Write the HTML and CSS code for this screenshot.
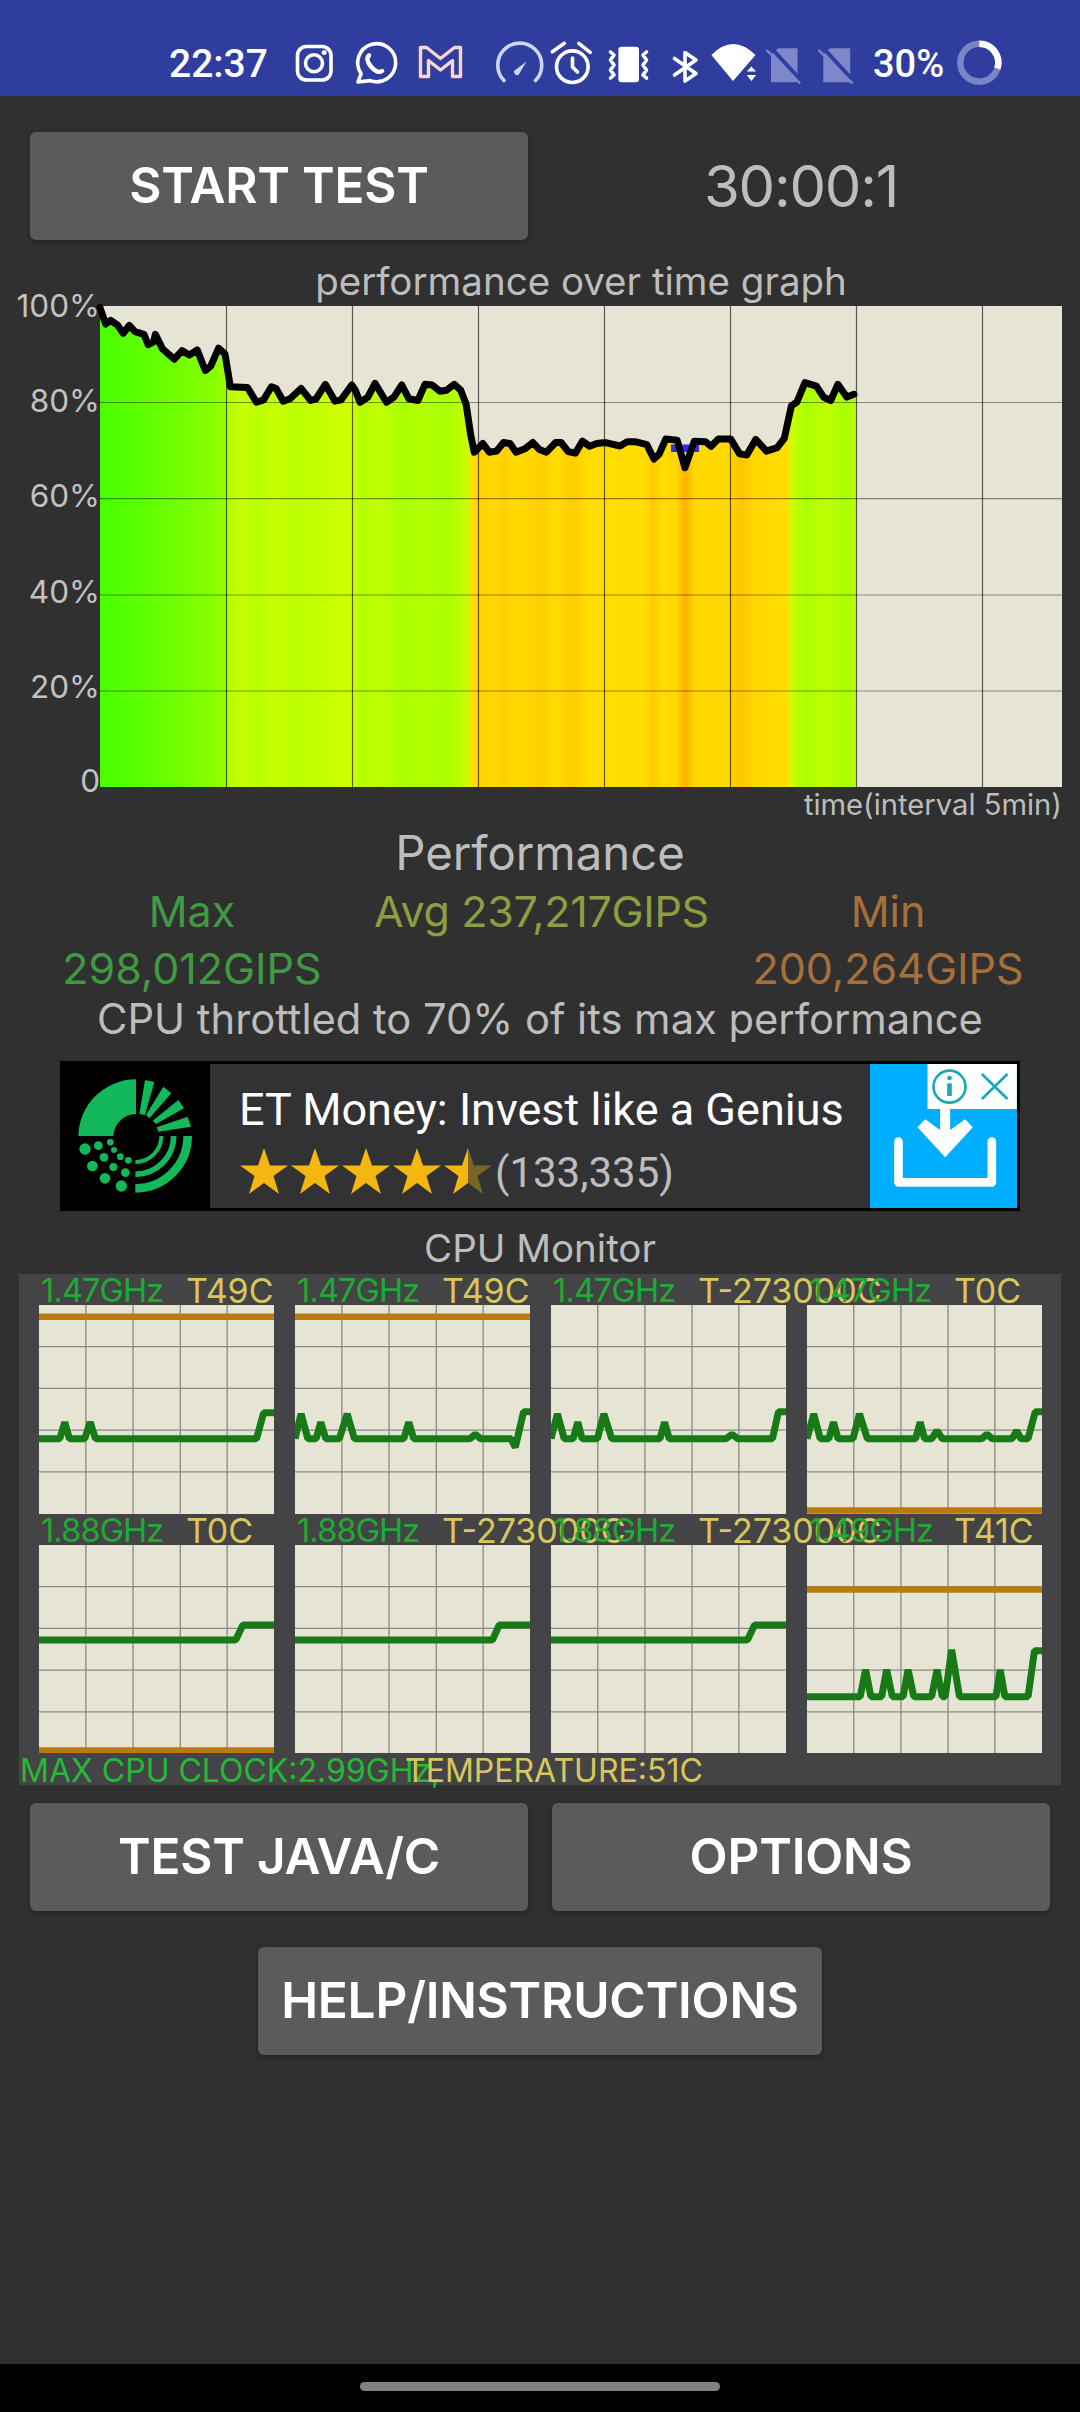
FILE: index.html
```html
<!DOCTYPE html>
<html lang="en">
<head>
<meta charset="utf-8">
<title>CPU Throttling Test</title>
<link rel="stylesheet" href="styles.css">
</head>
<body>
<div class="page">
  <header class="status">
    <span class="clock">22:37</span>
    <svg width="60" height="44" viewBox="290 42 60 44"><rect x="297.5" y="46.5" width="33.5" height="33.5" rx="9" class="ln"/><circle cx="314" cy="63.3" r="8.5" class="ln"/><circle cx="324.2" cy="52.6" r="2.5" class="wh"/></svg>
    <svg width="60" height="44" viewBox="350 42 60 44"><path d="M358 82L361.1 73.6A19 19 0 1 1 370.2 80.6Z" class="ln"/><path d="M369 55.5c-2.5 2-2 6 1.5 10.5c4 5 8.5 7 11.5 5" class="ln thick"/></svg>
    <svg width="80" height="44" viewBox="410 42 80 44"><path d="M420.5 47.5h6l14 11 14-11h6v29h-8v-16l-12 9.5-12-9.500v16h-8z" class="mail"/></svg>
    <svg width="58" height="44" viewBox="490 42 58 44"><path d="M504 80.500A22 22 0 1 1 535.500 80.500" class="ln soft"/><path d="M526.500 61.500L518.500 75A3.500 3.500 0 0 1 514 71Z" class="softfill"/></svg>
    <svg width="56" height="44" viewBox="548 42 56 44"><circle cx="572.300" cy="66.700" r="15.800" class="ln"/><path d="M572.500 58v9l5 5M552.300 51.700L564.400 43.300M578.800 43.300L590.200 52.300" class="ln"/></svg>
    <svg width="56" height="44" viewBox="604 42 56 44"><rect x="618.400" y="46.700" width="20.600" height="35.600" rx="3" class="wh"/><path d="M610.500 52l3.500 3-3.500 5 3.500 5-3.500 5 3.500 5-3.500 3M646.500 52l-3.500 3 3.500 5-3.500 5 3.500 5-3.500 5 3.500 3" class="ln"/></svg>
    <svg width="46" height="44" viewBox="660 42 46 44"><path d="M674.500 58.500L696 73.500 685 81V52.500L696 60 674.500 75" class="ln"/></svg>
    <svg width="56" height="44" viewBox="706 42 56 44"><path d="M711.400 55Q733 33 755.500 55L733 81Z" class="wh"/><path d="M751.400 66.500l4.700 5h-9.400zM751.400 81l-4.700-6h9.400z" class="wh"/></svg>
    <svg width="52" height="44" viewBox="762 42 52 44"><path d="M778 48.300H797.500V82.300H771V54.500Z" class="simfill"/><path d="M768.500 45L802.500 82" class="simcut"/><path d="M766.500 50L800.200 83.500" class="simline"/></svg>
    <svg width="54" height="44" viewBox="814 42 54 44"><path d="M830.300 48.300H850.200V82.300H823.300V54.500Z" class="simfill"/><path d="M820.500 45L854.500 82" class="simcut"/><path d="M818.500 50L852.600 83.500" class="simline"/></svg>
    <span class="pct">30%</span>
    <svg width="60" height="44" viewBox="960 42 60 44"><circle cx="979.300" cy="62.700" r="19" class="ring-bg"/><path d="M979.300 43.700A19 19 0 0 1 997.400 68.600" class="ring-fg"/></svg>
  </header>

  <div class="btn-row">
    <button class="btn">START TEST</button>
    <div class="timer">30:00:1</div>
  </div>

  <div class="chart-title">performance over time graph</div>
  <svg class="chart" width="1080" height="481" viewBox="0 0 1080 481">
    <defs>
      <linearGradient id="heat" gradientUnits="userSpaceOnUse" x1="280" x2="2397" y1="0" y2="0">
        <stop offset="0" stop-color="#48ff00"/><stop offset=".05" stop-color="#5cff00"/><stop offset=".1" stop-color="#70ff00"/><stop offset=".15" stop-color="#88ff00"/><stop offset=".165" stop-color="#98ff00"/><stop offset=".17" stop-color="#b4ff00"/><stop offset=".185" stop-color="#c8ff00"/><stop offset=".21" stop-color="#b8ff00"/><stop offset=".23" stop-color="#c8ff00"/><stop offset=".25" stop-color="#bcff00"/><stop offset=".28" stop-color="#c0ff00"/><stop offset=".3" stop-color="#c8ff00"/><stop offset=".335" stop-color="#d0ff00"/><stop offset=".345" stop-color="#b4ff00"/><stop offset=".37" stop-color="#c0ff00"/><stop offset=".4" stop-color="#aaff00"/><stop offset=".43" stop-color="#b4ff00"/><stop offset=".46" stop-color="#a8ff00"/><stop offset=".485" stop-color="#c8ff00"/><stop offset=".492" stop-color="#ffe000"/><stop offset=".505" stop-color="#ffd000"/><stop offset=".52" stop-color="#ffdc00"/><stop offset=".535" stop-color="#ffcf00"/><stop offset=".55" stop-color="#ffdc00"/><stop offset=".584" stop-color="#ffce00"/><stop offset=".603" stop-color="#ffdd00"/><stop offset=".624" stop-color="#ffcc00"/><stop offset=".645" stop-color="#ffde00"/><stop offset=".72" stop-color="#ffdd00"/><stop offset=".732" stop-color="#ffc800"/><stop offset=".744" stop-color="#ffdd00"/><stop offset=".762" stop-color="#ffd800"/><stop offset=".774" stop-color="#ffb000"/><stop offset=".786" stop-color="#ffd800"/><stop offset=".83" stop-color="#ffd800"/><stop offset=".848" stop-color="#ffc400"/><stop offset=".865" stop-color="#ffd800"/><stop offset=".905" stop-color="#ffdd00"/><stop offset=".91" stop-color="#ffe000"/><stop offset=".914" stop-color="#ccff00"/><stop offset=".934" stop-color="#aaff00"/><stop offset=".962" stop-color="#c0ff00"/><stop offset=".986" stop-color="#a8ff00"/><stop offset="1" stop-color="#bcff00"/>
      </linearGradient>
    </defs>
    <rect x="100" y="0" width="962" height="481" class="plot-bg"/>
    <g transform="translate(0 -26) scale(.35714 .34435)">
      <path fill="url(#heat)" d="M280 80L296 128 310 117 330 132 345 155 362 132 378 150 403 158 415 188 430 180 435 158 455 200 488 230 510 205 530 218 552 203 575 263 590 250 612 198 630 215 645 310 693 312 718 355 738 348 760 310 773 315 793 352 812 345 843 315 870 350 885 345 911 303 938 352 955 348 985 305 995 320 1008 355 1030 340 1050 300 1082 355 1103 340 1125 305 1145 345 1170 350 1190 303 1210 305 1232 323 1250 320 1272 303 1290 320 1305 360 1318 450 1328 500 1352 475 1370 500 1390 497 1410 472 1428 475 1445 500 1470 490 1492 472 1510 492 1530 500 1556 472 1571 472 1591 498 1611 503 1631 468 1651 483 1671 475 1696 472 1736 482 1756 470 1781 470 1811 478 1831 520 1846 505 1864 462 1896 465 1918 545 1944 468 1976 470 1991 483 2011 462 2046 462 2071 505 2091 508 2116 463 2146 497 2176 487 2196 460 2216 365 2231 355 2254 298 2286 308 2306 340 2326 350 2346 303 2371 340 2391 332L2397 332 2397 1472 280 1472Z"/>
    </g>
    <path d="M226.500 0V481M352.500 0V481M478.500 0V481M604.500 0V481M730.500 0V481M856.500 0V481M982.500 0V481" class="grid-v"/>
    <path d="M100 96.500H1062M100 192.700H1062M100 289H1062M100 385H1062" class="grid-h"/>
    <rect x="671" y="138.500" width="28" height="7.500" class="marker"/>
    <g transform="translate(0 -26) scale(.35714 .34435)">
      <path class="perf" d="M280 80L296 128 310 117 330 132 345 155 362 132 378 150 403 158 415 188 430 180 435 158 455 200 488 230 510 205 530 218 552 203 575 263 590 250 612 198 630 215 645 310 693 312 718 355 738 348 760 310 773 315 793 352 812 345 843 315 870 350 885 345 911 303 938 352 955 348 985 305 995 320 1008 355 1030 340 1050 300 1082 355 1103 340 1125 305 1145 345 1170 350 1190 303 1210 305 1232 323 1250 320 1272 303 1290 320 1305 360 1318 450 1328 500 1352 475 1370 500 1390 497 1410 472 1428 475 1445 500 1470 490 1492 472 1510 492 1530 500 1556 472 1571 472 1591 498 1611 503 1631 468 1651 483 1671 475 1696 472 1736 482 1756 470 1781 470 1811 478 1831 520 1846 505 1864 462 1896 465 1918 545 1944 468 1976 470 1991 483 2011 462 2046 462 2071 505 2091 508 2116 463 2146 497 2176 487 2196 460 2216 365 2231 355 2254 298 2286 308 2306 340 2326 350 2346 303 2371 340 2391 332"/>
    </g>
    <text x="100" y="11" class="axis">100%</text>
    <text x="100" y="106" class="axis">80%</text>
    <text x="100" y="201" class="axis">60%</text>
    <text x="100" y="297" class="axis">40%</text>
    <text x="100" y="392" class="axis">20%</text>
    <text x="100" y="486" class="axis">0</text>
  </svg>
  <div class="time-label">time(interval 5min)</div>

  <div class="perf-title">Performance</div>
  <div class="stats">
    <div class="stat max">Max</div><div class="stat avg">Avg 237,217GIPS</div><div class="stat min">Min</div>
    <div class="stat max">298,012GIPS</div><div class="stat"></div><div class="stat min">200,264GIPS</div>
  </div>
  <div class="throttle">CPU throttled to 70% of its max performance</div>

  <div class="ad">
    <svg class="ad-logo" width="147" height="144" viewBox="39 42 441 432">
      <path d="M85 258A173 173 0 0 1 258 88L258 192A68 68 0 0 0 190 258Z" class="gr"/>
      <path d="M285 90L313 96 285 195 268 192ZM340 110L364 130 298 205 288 195ZM385 150L402 175 318 222 308 212ZM413 200L423 230 325 245 320 232Z" class="gr"/>
      <path d="M413 258A157 157 0 0 1 256 415" class="arc a1"/><path d="M371 258A115 115 0 0 1 256 373" class="arc a2"/><path d="M334 258A78 78 0 0 1 256 336" class="arc a3"/>
      <g class="gr"><circle cx="105" cy="297" r="17"/><circle cx="145" cy="287" r="13"/><circle cx="181" cy="277" r="10"/><circle cx="192" cy="300" r="9"/><circle cx="162" cy="322" r="13"/><circle cx="127" cy="348" r="16"/><circle cx="211" cy="320" r="10"/><circle cx="235" cy="331" r="10"/><circle cx="190" cy="351" r="12"/><circle cx="226" cy="368" r="13"/><circle cx="165" cy="385" r="16"/><circle cx="214" cy="408" r="17"/></g>
    </svg>
    <div class="ad-body">
      <div class="ad-title">ET Money: Invest like a Genius</div>
      <div class="ad-rating">
        <svg class="stars" width="256" height="46" viewBox="0 0 256 46">
          <g class="gold">
            <polygon points="24,0 30,17.500 48,17.500 33.500,28 39,46 24,35 9,46 14.500,28 0,17.500 18,17.500"/>
            <polygon points="75,0 81,17.500 99,17.500 84.500,28 90,46 75,35 60,46 65.500,28 51,17.500 69,17.500"/>
            <polygon points="126,0 132,17.500 150,17.500 135.500,28 141,46 126,35 111,46 116.500,28 102,17.500 120,17.500"/>
            <polygon points="177,0 183,17.500 201,17.500 186.500,28 192,46 177,35 162,46 167.500,28 153,17.500 171,17.500"/>
            <polygon points="228,0 222,17.500 204,17.500 218.500,28 213,46 228,35"/>
          </g>
          <polygon class="dim" points="228,0 234,17.500 252,17.500 237.500,28 243,46 228,35"/>
        </svg>
        <span class="rating">(133,335)</span>
      </div>
    </div>
    <svg class="ad-cta" width="147" height="144" viewBox="690 42 440 432">
      <rect x="862" y="42" width="268" height="135" class="wh"/>
      <circle cx="928" cy="110" r="48" class="teal"/>
      <path d="M928 100V138" class="teal thickt"/><circle cx="928" cy="84" r="7" class="tealfill"/>
      <path d="M1025 72L1102 147M1102 72L1025 147" class="teal"/>
      <path d="M900 177H930V240L975 208 998 232 915 322 832 232 855 208 900 240Z" class="wh"/>
      <path d="M775 275V397H1055V275" class="tray"/>
    </svg>
  </div>

  <div class="monitor-title">CPU Monitor</div>
  <section class="monitor">
    <div class="cell">
      <div class="cell-label"><span class="freq">1.47GHz</span><span class="temp">T49C</span></div>
      <svg class="graph" width="235" height="208.500" viewBox="110 132 657 605" preserveAspectRatio="none">
        <defs><path id="cell-grid" class="cell-lines" d="M131 0V605M263 0V605M395 0V605M526 0V605M0 121H657M0 242H657M0 363H657M0 484H657"/></defs>
        <use href="#cell-grid" x="110" y="132"/>
        <path d="M110 166H767" class="temp-line"/>
        <path d="M110 520H168L182 472 195 520H238L253 472 268 520H718L738 445H768" class="freq-line"/>
      </svg>
    </div>
    <div class="cell">
      <div class="cell-label"><span class="freq">1.47GHz</span><span class="temp">T49C</span></div>
      <svg class="graph" width="235" height="208.500" viewBox="826 132 657 605" preserveAspectRatio="none">
        <use href="#cell-grid" x="826" y="132"/>
        <path d="M826 166H1483" class="temp-line"/>
        <path d="M826 520L843 448 862 520H885L898 472 912 520H950L972 448 992 520H1130L1144 472 1158 520H1315L1330 507 1345 520H1430L1442 545 1465 442H1483" class="freq-line"/>
      </svg>
    </div>
    <div class="cell">
      <div class="cell-label"><span class="freq">1.47GHz</span><span class="temp">T-273000C</span></div>
      <svg class="graph" width="235" height="208.500" viewBox="85 132 658 605" preserveAspectRatio="none">
        <use href="#cell-grid" x="85" y="132"/>
        <path d="M85 520L103 448 122 520H147L160 472 172 520H215L233 448 255 520H390L403 472 416 520H575L592 507 608 520H705L722 442H743" class="freq-line"/>
      </svg>
    </div>
    <div class="cell">
      <div class="cell-label"><span class="freq">1.47GHz</span><span class="temp">T0C</span></div>
      <svg class="graph" width="235" height="208.500" viewBox="801 132 658 605" preserveAspectRatio="none">
        <use href="#cell-grid" x="801" y="132"/>
        <path d="M801 728H1459" class="temp-line"/>
        <path d="M801 520L820 448 838 520H862L875 472 888 520H930L948 448 970 520H1105L1118 472 1130 520H1150L1165 497 1180 520H1290L1305 507 1320 520H1375L1388 497 1400 520H1420L1440 442H1459" class="freq-line"/>
      </svg>
    </div>
    <div class="cell">
      <div class="cell-label"><span class="freq">1.88GHz</span><span class="temp">T0C</span></div>
      <svg class="graph" width="235" height="208.500" viewBox="110 828 657 605" preserveAspectRatio="none">
        <use href="#cell-grid" x="110" y="828"/>
        <path d="M110 1424H767" class="temp-line"/>
        <path d="M110 1104H660L680 1060H767" class="freq-line"/>
      </svg>
    </div>
    <div class="cell">
      <div class="cell-label"><span class="freq">1.88GHz</span><span class="temp">T-273000C</span></div>
      <svg class="graph" width="235" height="208.500" viewBox="826 828 657 605" preserveAspectRatio="none">
        <use href="#cell-grid" x="826" y="828"/>
        <path d="M826 1104H1378L1397 1060H1483" class="freq-line"/>
      </svg>
    </div>
    <div class="cell">
      <div class="cell-label"><span class="freq">1.88GHz</span><span class="temp">T-273000C</span></div>
      <svg class="graph" width="235" height="208.500" viewBox="85 828 658 605" preserveAspectRatio="none">
        <use href="#cell-grid" x="85" y="828"/>
        <path d="M85 1104H635L655 1060H743" class="freq-line"/>
      </svg>
    </div>
    <div class="cell">
      <div class="cell-label"><span class="freq">1.49GHz</span><span class="temp">T41C</span></div>
      <svg class="graph" width="235" height="208.500" viewBox="801 828 658 605" preserveAspectRatio="none">
        <use href="#cell-grid" x="801" y="828"/>
        <path d="M801 957H1459" class="temp-line"/>
        <path d="M801 1268H950L965 1190 980 1268H1010L1024 1190 1040 1268H1070L1084 1190 1100 1268H1150L1165 1190 1180 1268H1188L1206 1132 1228 1268H1330L1342 1190 1355 1268H1420L1438 1135H1459" class="freq-line"/>
      </svg>
    </div>
    <div class="monitor-foot"><span class="foot-clock">MAX CPU CLOCK:2.99GHz,</span><span class="foot-temp">TEMPERATURE:51C</span></div>
  </section>

  <div class="btn-row btn-row-low">
    <button class="btn">TEST JAVA/C</button>
    <button class="btn">OPTIONS</button>
  </div>
  <button class="btn btn-help">HELP/INSTRUCTIONS</button>

  <footer class="nav"><div class="home-bar"></div></footer>
</div>
</body>
</html>
```
FILE: styles.css
```css
* { box-sizing: border-box; }
html, body { margin: 0; padding: 0; }
body { background: #303030; font-family: Inter, "Liberation Sans", sans-serif; color: #bdbdbd; }
.page { width: 1080px; height: 2412px; display: flex; flex-direction: column; overflow: hidden; }

/* status bar */
.status { height: 96px; background: #2f3e9e; display: flex; align-items: flex-start; padding: 42px 0 0 169px; font-family: Roboto, sans-serif; font-weight: 500; color: #fff; flex: none; }
.status svg { display: block; flex: none; overflow: visible; }
.clock { width: 121px; font-size: 39px; line-height: 44px; flex: none; }
.pct { width: 92px; padding-left: 5px; font-size: 38px; line-height: 44px; flex: none; }
.ln { fill: none; stroke: #fff; stroke-width: 3.6; stroke-linecap: round; stroke-linejoin: round; }
.thick { stroke-width: 4.5; }
.wh { fill: #fff; }
.soft { stroke: #cfd4f0; }
.softfill { fill: #cfd4f0; }
.mail { fill: none; stroke: #fbd4d6; stroke-width: 3.4; stroke-linejoin: round; }
.simfill { fill: #7d87c9; }
.simcut { stroke: #2f3e9e; stroke-width: 4; fill: none; }
.simline { stroke: #7d87c9; stroke-width: 2.4; fill: none; }
.ring-bg { fill: none; stroke: #7a85c8; stroke-width: 6.5; }
.ring-fg { fill: none; stroke: #fff; stroke-width: 6.5; }

/* buttons */
.btn-row { display: grid; grid-template-columns: 498px 498px; gap: 24px; padding: 36px 30px 0; flex: none; }
.btn { height: 108px; border: 0; border-radius: 6px; background: #5b5b5d; color: #fff; font: 600 49.500px/1 Inter, "Liberation Sans", sans-serif; letter-spacing: -.2px; padding: 0; box-shadow: 0 2px 5px rgba(0,0,0,.3); }
.timer { font-size: 58px; line-height: 108px; letter-spacing: -1.200px; text-align: center; color: #bdbdbd; }
.btn-row-low { padding-top: 18px; }
.btn-help { width: 564px; margin: 36px 0 0 258px; flex: none; }

/* chart */
.chart-title { height: 66px; width: 1062px; padding: 18px 0 0 100px; font-size: 38.500px; line-height: 46px; text-align: center; color: #bdbdbd; flex: none; white-space: nowrap; }
.chart { display: block; flex: none; overflow: visible; }
.plot-bg { fill: #e6e5d5; }
.grid-v { stroke: rgba(0,0,0,.62); stroke-width: 1.2; fill: none; }
.grid-h { stroke: rgba(0,0,0,.42); stroke-width: 1.2; fill: none; }
.marker { fill: #2f2fee; }
.perf { fill: none; stroke: #000; stroke-width: 7; stroke-linejoin: round; stroke-linecap: round; vector-effect: non-scaling-stroke; }
.axis { fill: #c2c2c2; font-size: 31.500px; text-anchor: end; font-family: Inter, "Liberation Sans", sans-serif; }
.time-label { height: 36px; width: 1062px; font-size: 29.200px; line-height: 36px; text-align: right; flex: none; color: #bdbdbd; }

/* stats */
.perf-title { height: 60px; font-size: 47.300px; line-height: 60px; text-align: center; flex: none; }
.stats { display: grid; grid-template-columns: 364px 334px 360px; padding-left: 10px; flex: none; }
.stat { height: 57px; font-size: 43px; line-height: 57px; text-align: center; white-space: nowrap; }
.avg { letter-spacing: -.300px; }
.max { color: #3f9a43; }
.avg { color: #8c9e42; }
.min { color: #a6703c; }
.throttle { height: 45px; font-size: 41.700px; line-height: 45px; text-align: center; white-space: nowrap; flex: none; }

/* ad */
.ad { margin: 19px 0 0 60px; width: 960px; height: 150px; border: 3px solid #000; display: flex; background: #323234; flex: none; }
.ad-logo { display: block; background: #000; flex: none; }
.gr { fill: #12b85a; }
.arc { fill: none; stroke: #12b85a; }
.a1 { stroke-width: 26; }
.a2 { stroke-width: 17; }
.a3 { stroke-width: 12; }
.ad-body { flex: 1; padding: 21px 0 0 29px; font-family: Roboto, sans-serif; min-width: 0; }
.ad-title { font-size: 45px; line-height: 50px; color: #fff; white-space: nowrap; }
.ad-rating { display: flex; align-items: flex-start; margin-top: 13px; margin-left: 1px; }
.stars { display: block; flex: none; }
.gold { fill: #f4b610; }
.dim { fill: #7a6425; }
.rating { font-size: 42px; line-height: 46px; color: #bcbcbc; margin-top: 2px; margin-left: -1px; }
.ad-cta { display: block; background: #00aeff; flex: none; }
.teal { fill: none; stroke: #1aa9b8; stroke-width: 8; }
.thickt { stroke-width: 14; }
.tealfill { fill: #1aa9b8; }
.tray { fill: none; stroke: #fff; stroke-width: 26; stroke-linecap: round; stroke-linejoin: round; }

/* cpu monitor */
.monitor-title { height: 63px; padding-top: 11px; font-size: 38.500px; line-height: 52px; text-align: center; flex: none; }
.monitor { width: 1042px; height: 511px; margin-left: 19px; padding-left: 20px; background: #444446; display: grid; grid-template-columns: repeat(4, 235px); column-gap: 21px; grid-template-rows: 239.500px 240px 31.500px; flex: none; }
.cell { min-width: 0; }
.cell-label { height: 31px; display: flex; line-height: 33px; white-space: nowrap; }
.freq { width: 148px; flex: none; padding-left: 2px; color: #20aa32; font-size: 32.500px; letter-spacing: -.850px; }
.temp { color: #d9c75e; font-size: 34px; margin-left: -1px; }
.graph { display: block; background: #e6e5d5; overflow: hidden; }
.cell-lines { fill: none; stroke: #8a8a82; stroke-width: 1.300; vector-effect: non-scaling-stroke; }
.temp-line { fill: none; stroke: #b97a12; stroke-width: 6.500; vector-effect: non-scaling-stroke; }
.freq-line { fill: none; stroke: #177a17; stroke-width: 7; stroke-linejoin: bevel; vector-effect: non-scaling-stroke; }
.monitor-foot { grid-column: 1 / -1; margin-left: -19px; display: flex; font-size: 32px; line-height: 33px; white-space: nowrap; }
.foot-clock { width: 385px; flex: none; color: #22bb33; }
.foot-temp { color: #d9c75e; }

/* nav */
.nav { margin-top: auto; height: 48px; background: #000; display: flex; justify-content: center; padding-top: 18px; flex: none; }
.home-bar { width: 360px; height: 9px; background: #808080; border-radius: 5px; }
```
